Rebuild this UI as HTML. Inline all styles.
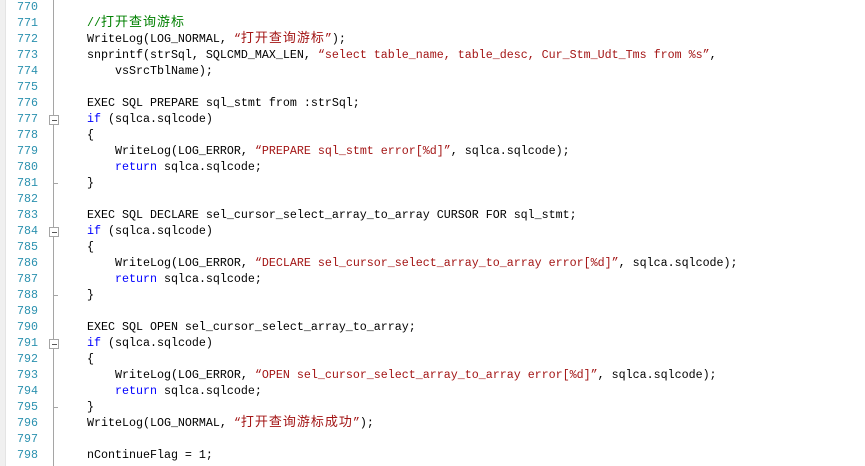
<!DOCTYPE html>
<html><head><meta charset="utf-8"><style>
html,body{margin:0;padding:0;background:#fff;width:865px;height:466px;overflow:hidden;position:relative}
.strip{position:absolute;left:0;top:0;width:5px;height:466px;background:#f0f0f0;border-right:1px solid #e4e4e4}
.sep{position:absolute;left:53px;top:0;width:1px;height:466px;background:#a5a5a5}
.tick{position:absolute;left:53px;width:5px;height:1px;background:#a5a5a5}
.fb{position:absolute;left:49px;width:8px;height:8px;border:1px solid #a5a5a5;background:#fff}
.fb:after{content:"";position:absolute;left:2px;top:4px;width:5px;height:1px;background:#555}
.num{position:absolute;left:0;top:-1px;width:38px;text-align:right;font:11.67px/16px "Liberation Mono",monospace;color:#2b91af;white-space:pre;margin:0}
.code{position:absolute;left:87px;top:-1px;font:11.67px "Liberation Mono",monospace;color:#000;margin:0}
.code div{height:16px;line-height:16px;overflow:visible;white-space:pre}
.k{color:#0000ff}.s{color:#a31515}.g{color:#008000}
.c{font-family:"Noto Sans CJK SC","WenQuanYi Zen Hei",sans-serif;font-size:13px;letter-spacing:1px;line-height:10px}
</style></head><body>
<div class="strip"></div>
<div class="sep"></div>
<div class="fb" style="top:115px"></div>
<div class="fb" style="top:227px"></div>
<div class="fb" style="top:339px"></div>
<div class="tick" style="top:183px"></div>
<div class="tick" style="top:295px"></div>
<div class="tick" style="top:407px"></div>
<pre class="num">770
771
772
773
774
775
776
777
778
779
780
781
782
783
784
785
786
787
788
789
790
791
792
793
794
795
796
797
798</pre>
<div class="code"><div> </div><div><span class="g">//<span class="c">打开查询游标</span></span></div><div>WriteLog(LOG_NORMAL, <span class="s">“<span class="c">打开查询游标</span>”</span>);</div><div>snprintf(strSql, SQLCMD_MAX_LEN, <span class="s">“select table_name, table_desc, Cur_Stm_Udt_Tms from %s”</span>,</div><div>    vsSrcTblName);</div><div> </div><div>EXEC SQL PREPARE sql_stmt from :strSql;</div><div><span class="k">if</span> (sqlca.sqlcode)</div><div>{</div><div>    WriteLog(LOG_ERROR, <span class="s">“PREPARE sql_stmt error[%d]”</span>, sqlca.sqlcode);</div><div>    <span class="k">return</span> sqlca.sqlcode;</div><div>}</div><div> </div><div>EXEC SQL DECLARE sel_cursor_select_array_to_array CURSOR FOR sql_stmt;</div><div><span class="k">if</span> (sqlca.sqlcode)</div><div>{</div><div>    WriteLog(LOG_ERROR, <span class="s">“DECLARE sel_cursor_select_array_to_array error[%d]”</span>, sqlca.sqlcode);</div><div>    <span class="k">return</span> sqlca.sqlcode;</div><div>}</div><div> </div><div>EXEC SQL OPEN sel_cursor_select_array_to_array;</div><div><span class="k">if</span> (sqlca.sqlcode)</div><div>{</div><div>    WriteLog(LOG_ERROR, <span class="s">“OPEN sel_cursor_select_array_to_array error[%d]”</span>, sqlca.sqlcode);</div><div>    <span class="k">return</span> sqlca.sqlcode;</div><div>}</div><div>WriteLog(LOG_NORMAL, <span class="s">“<span class="c">打开查询游标成功</span>”</span>);</div><div> </div><div>nContinueFlag = 1;</div></div>
</body></html>
